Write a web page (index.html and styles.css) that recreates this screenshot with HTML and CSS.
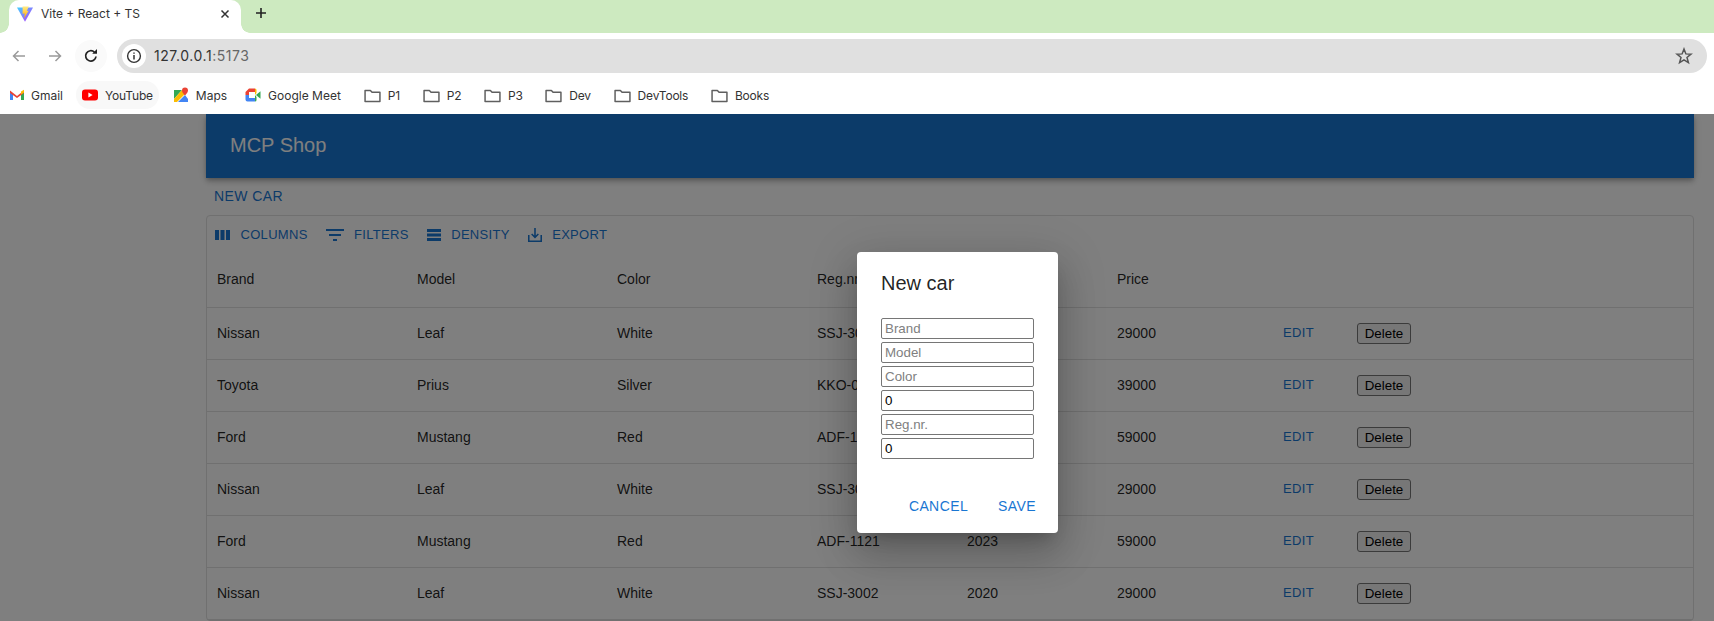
FILE: index.html
```html
<!DOCTYPE html>
<html lang="en">
	<head>
		<meta charset="UTF-8">
		<title>Vite + React + TS</title>
		<link rel="stylesheet" href="styles.css">
	</head>
	<body>
		<div class="tabstrip">
			<div class="tab">
				<svg class="favicon" viewBox="0 0 16 16" width="16" height="16">
					<defs>
						<linearGradient id="vite-a" x1="0" y1="0" x2="1" y2="1"><stop offset="0" stop-color="#41d1ff"/><stop offset="1" stop-color="#bd34fe"/></linearGradient>
						<linearGradient id="vite-b" x1="0" y1="0" x2="0" y2="1"><stop offset="0" stop-color="#ffea83"/><stop offset="1" stop-color="#ffa800"/></linearGradient>
					</defs>
					<path d="M0 1.6 L16 1.6 L8 15.8 Z" fill="url(#vite-a)"/>
					<path d="M5.6 0.6 L11.8 0.6 L9.8 5 L11.6 4.8 L7 12.6 L7.8 7.4 L5.6 7.8 Z" fill="url(#vite-b)"/>
				</svg>
				<span class="tab-title">Vite + React + TS</span>
				<svg class="tab-close" viewBox="0 0 10 10" width="10" height="10"><path d="M1.5 1.5 L8.5 8.5 M8.5 1.5 L1.5 8.5" stroke="#333" stroke-width="1.5"/></svg>
			</div>
			<svg class="new-tab" viewBox="0 0 12 12" width="12" height="12"><path d="M6 1 V11 M1 6 H11" stroke="#222" stroke-width="1.6"/></svg>
		</div>

		<div class="toolbar">
			<svg class="nav-icon" viewBox="0 0 16 16" width="16" height="16"><path d="M14 8 H3 M7.5 3 L2.5 8 L7.5 13" fill="none" stroke="#9a9a9a" stroke-width="1.5"/></svg>
			<svg class="nav-icon" viewBox="0 0 16 16" width="16" height="16"><path d="M2 8 H13 M8.5 3 L13.5 8 L8.5 13" fill="none" stroke="#9a9a9a" stroke-width="1.5"/></svg>
			<div class="reload">
				<svg viewBox="0 0 16 16" width="16" height="16"><path d="M13 8.5 A5.2 5.2 0 1 1 11.4 4.1" fill="none" stroke="#222" stroke-width="1.7"/><path d="M9.2 5.8 H14 V1 Z" fill="#222"/></svg>
			</div>
			<div class="urlbar">
				<span class="site-info">
					<svg viewBox="0 0 16 16" width="16" height="16"><circle cx="8" cy="8" r="6.4" fill="none" stroke="#333" stroke-width="1.4"/><path d="M8 7 V11.5 M8 4.4 V5.8" stroke="#333" stroke-width="1.5"/></svg>
				</span>
				<span class="url">127.0.0.1<span class="url-port">:5173</span></span>
				<svg class="star" viewBox="0 0 18 18" width="18" height="18"><path d="M9 2 L10.9 6.9 L16 7.2 L12 10.5 L13.4 15.6 L9 12.8 L4.6 15.6 L6 10.5 L2 7.2 L7.1 6.9 Z" fill="none" stroke="#555" stroke-width="1.5"/></svg>
			</div>
		</div>

		<div class="bookmarks">
			<span class="bookmark bookmark-gmail">
				<svg viewBox="0 0 16 16" width="16" height="16"><path d="M1 4 V13 H4 V7 Z" fill="#4285f4"/><path d="M15 4 V13 H12 V7 Z" fill="#34a853"/><path d="M1 3.6 L8 9 L15 3.6 L15 6 L8 11 L1 6 Z" fill="#ea4335"/><path d="M12 4.5 L15 2.8 V5.5 L12 7.5 Z" fill="#fbbc04"/></svg>
				Gmail
			</span>
			<span class="bookmark bookmark-hover">
				<svg viewBox="0 0 16 16" width="16" height="16"><rect x="0" y="2.5" width="16" height="11" rx="3" fill="#f00"/><path d="M6.4 5.6 L10.6 8 L6.4 10.4 Z" fill="#fff"/></svg>
				YouTube
			</span>
			<span class="bookmark bookmark-maps">
				<svg viewBox="0 0 16 16" width="16" height="16"><path d="M1 3 L9 3 L1 12 Z" fill="#34a853"/><path d="M9 3 L12 7 L4 15 L1 15 L1 12 Z" fill="#fbbc04"/><path d="M12 8 L15 12 V15 H5 Z" fill="#4285f4"/><path d="M12 0.5 A3 3 0 0 1 15 3.5 C15 5.5 12 8.5 12 8.5 C12 8.5 9 5.5 9 3.5 A3 3 0 0 1 12 0.5 Z" fill="#ea4335"/></svg>
				Maps
			</span>
			<span class="bookmark bookmark-last">
				<svg viewBox="0 0 16 16" width="16" height="16"><path d="M0.5 5 L4 1.5 H10 V5 H4 V8 H0.5 Z" fill="#ea4335"/><path d="M0.5 8 H4 V11 H10 V14.5 H2.5 A2 2 0 0 1 0.5 12.5 Z" fill="#4285f4"/><path d="M10 1.5 A1.5 1.5 0 0 1 11.5 3 V6 L10 8 V5 Z" fill="#fbbc04"/><path d="M10 8 L11.5 10 V13 A1.5 1.5 0 0 1 10 14.5 V11 Z" fill="#34a853"/><path d="M11 8 L15.5 4.2 V11.8 Z" fill="#34a853"/></svg>
				Google Meet
			</span>
			<span class="bookmark bookmark-folder"><svg class="folder" viewBox="0 0 16 16" width="16" height="16"><use href="#folder"/></svg>P1</span>
			<span class="bookmark bookmark-folder"><svg class="folder" viewBox="0 0 16 16" width="16" height="16"><use href="#folder"/></svg>P2</span>
			<span class="bookmark bookmark-folder"><svg class="folder" viewBox="0 0 16 16" width="16" height="16"><use href="#folder"/></svg>P3</span>
			<span class="bookmark bookmark-folder"><svg class="folder" viewBox="0 0 16 16" width="16" height="16"><use href="#folder"/></svg>Dev</span>
			<span class="bookmark bookmark-folder"><svg class="folder" viewBox="0 0 16 16" width="16" height="16"><use href="#folder"/></svg>DevTools</span>
			<span class="bookmark bookmark-folder"><svg class="folder" viewBox="0 0 16 16" width="16" height="16"><use href="#folder"/></svg>Books</span>
		</div>

		<svg class="defs" width="0" height="0">
			<symbol id="folder" viewBox="0 0 16 16"><path d="M1 3.2 H6 L7.6 5 H15 V13.6 H1 Z" fill="none" stroke="#5f5f5f" stroke-width="1.4" stroke-linejoin="round"/></symbol>
		</svg>

		<div class="page">
			<div class="container">
				<header class="appbar">MCP Shop</header>
				<a class="new-car">New car</a>

				<div class="grid">
					<div class="grid-toolbar">
						<span class="tool">
							<svg viewBox="0 0 15 10" width="15" height="10"><path d="M0 0h4v10H0zM5.5 0h4v10h-4zM11 0h4v10h-4z" fill="#1976d2"/></svg>
							Columns
						</span>
						<span class="tool">
							<svg viewBox="3 6 18 12" width="18" height="12"><path d="M10 18h4v-2h-4v2zM3 6v2h18V6H3zm3 7h12v-2H6v2z" fill="#1976d2"/></svg>
							Filters
						</span>
						<span class="tool">
							<svg viewBox="0 0 14 12" width="14" height="12"><path d="M0 0h14v3H0zM0 4.5h14v3H0zM0 9h14v3H0z" fill="#1976d2"/></svg>
							Density
						</span>
						<span class="tool">
							<svg viewBox="3 3 18 18" width="14" height="14"><path d="M19 12v7H5v-7H3v9h18v-9h-2zm-6 .67l2.59-2.58L17 11.5l-5 5-5-5 1.41-1.41L11 12.67V3h2v9.67z" fill="#1976d2"/></svg>
							Export
						</span>
					</div>

					<div class="row row-head">
						<span class="cell">Brand</span><span class="cell">Model</span><span class="cell">Color</span><span class="cell">Reg.nr.</span><span class="cell">Year</span><span class="cell">Price</span>
					</div>
					<div class="row">
						<span class="cell">Nissan</span><span class="cell">Leaf</span><span class="cell">White</span><span class="cell">SSJ-3002</span><span class="cell">2020</span><span class="cell">29000</span><a class="edit">Edit</a><button class="delete">Delete</button>
					</div>
					<div class="row">
						<span class="cell">Toyota</span><span class="cell">Prius</span><span class="cell">Silver</span><span class="cell">KKO-0212</span><span class="cell">2022</span><span class="cell">39000</span><a class="edit">Edit</a><button class="delete">Delete</button>
					</div>
					<div class="row">
						<span class="cell">Ford</span><span class="cell">Mustang</span><span class="cell">Red</span><span class="cell">ADF-1121</span><span class="cell">2023</span><span class="cell">59000</span><a class="edit">Edit</a><button class="delete">Delete</button>
					</div>
					<div class="row">
						<span class="cell">Nissan</span><span class="cell">Leaf</span><span class="cell">White</span><span class="cell">SSJ-3002</span><span class="cell">2020</span><span class="cell">29000</span><a class="edit">Edit</a><button class="delete">Delete</button>
					</div>
					<div class="row">
						<span class="cell">Ford</span><span class="cell">Mustang</span><span class="cell">Red</span><span class="cell">ADF-1121</span><span class="cell">2023</span><span class="cell">59000</span><a class="edit">Edit</a><button class="delete">Delete</button>
					</div>
					<div class="row">
						<span class="cell">Nissan</span><span class="cell">Leaf</span><span class="cell">White</span><span class="cell">SSJ-3002</span><span class="cell">2020</span><span class="cell">29000</span><a class="edit">Edit</a><button class="delete">Delete</button>
					</div>
				</div>
			</div>

			<div class="backdrop"></div>

			<div class="dialog">
				<h2 class="dialog-title">New car</h2>
				<div class="dialog-fields">
					<input placeholder="Brand">
					<input placeholder="Model">
					<input placeholder="Color">
					<input value="0">
					<input placeholder="Reg.nr.">
					<input value="0">
				</div>
				<div class="dialog-actions">
					<a class="dialog-btn">Cancel</a>
					<a class="dialog-btn">Save</a>
				</div>
			</div>
		</div>
	</body>
</html>
```

FILE: styles.css
```css
html,
body {
	margin: 0;
	height: 621px;
	overflow: hidden;
}
body {
	display: flex;
	flex-direction: column;
	font-family: "Liberation Sans", Arial, sans-serif;
	background: #fff;
}
svg {
	flex: none;
}
.defs {
	position: absolute;
}

/* browser chrome */
.tabstrip {
	height: 33px;
	background: #cdeac0;
	display: flex;
	align-items: flex-start;
	padding-left: 9px;
	flex: none;
}
.tab {
	position: relative;
	width: 232px;
	height: 33px;
	box-sizing: border-box;
	background: #fff;
	border-radius: 10px 10px 0 0;
	display: flex;
	align-items: center;
	padding: 0 11px 6px 8px;
	font: 12px Inter, "Noto Sans", sans-serif;
	color: #333;
}
.tab::before,
.tab::after {
	content: "";
	position: absolute;
	bottom: 0;
	width: 9px;
	height: 9px;
}
.tab::before {
	left: -9px;
	background: radial-gradient(circle at 0 0, #cdeac0 8.5px, #fff 9px);
}
.tab::after {
	right: -9px;
	background: radial-gradient(circle at 100% 0, #cdeac0 8.5px, #fff 9px);
}
.favicon {
	margin-right: 8px;
}
.tab-title {
	flex: 1;
}
.new-tab {
	margin: 7px 0 0 14px;
}
.toolbar {
	height: 46px;
	box-sizing: border-box;
	padding: 6px 7px 7px 11px;
	display: flex;
	align-items: center;
	flex: none;
}
.nav-icon {
	margin-right: 20px;
}
.nav-icon + .reload {
	margin-left: -8px;
}
.reload {
	width: 32px;
	height: 32px;
	border-radius: 50%;
	background: #fafafa;
	display: flex;
	align-items: center;
	justify-content: center;
	margin-right: 10px;
}
.urlbar {
	flex: 1;
	height: 34px;
	border-radius: 17px;
	background: #e0e0e0;
	display: flex;
	align-items: center;
	padding: 0 14px 0 5px;
	font: 14px Inter, "Noto Sans", sans-serif;
	letter-spacing: .55px;
	color: #333;
}
.site-info {
	width: 24px;
	height: 24px;
	border-radius: 50%;
	background: #fff;
	display: flex;
	align-items: center;
	justify-content: center;
	margin-right: 8px;
}
.url {
	flex: 1;
}
.url-port {
	color: #666;
}
.bookmarks {
	height: 35px;
	box-sizing: border-box;
	display: flex;
	align-items: center;
	padding: 0 0 3px 1px;
	font: 12px Inter, "Noto Sans", sans-serif;
	color: #333;
	flex: none;
}
.bookmark {
	display: flex;
	align-items: center;
	gap: 7px;
	height: 28px;
	padding: 0 8px;
	border-radius: 14px;
	margin-right: 5px;
}
.bookmark-gmail {
	gap: 6px;
}
.bookmark-hover {
	background: #f8f8f8;
	padding: 0 6px;
	letter-spacing: -.2px;
	margin-right: 6px;
}
.bookmark-maps {
	margin-right: 2px;
}
.bookmark-last {
	margin-right: 7px;
}
.bookmark-folder {
	margin-right: 6.7px;
	letter-spacing: -.2px;
}
.folder {
	width: 17px;
	height: 17px;
}

/* page */
.page {
	flex: 1;
	position: relative;
	overflow: hidden;
	min-height: 0;
	color: rgba(0, 0, 0, .87);
	font-size: 14px;
}
.container {
	width: 1488px;
	margin-left: 206px;
}
.appbar {
	height: 64px;
	box-sizing: border-box;
	padding: 0 24px;
	background: #1976d2;
	color: #fff;
	font-size: 20px;
	line-height: 62px;
	box-shadow: 0 2px 4px -1px rgba(0, 0, 0, .2), 0 4px 5px rgba(0, 0, 0, .14), 0 1px 10px rgba(0, 0, 0, .12);
}
.new-car,
.tool,
.edit,
.dialog-btn {
	color: #1976d2;
	text-transform: uppercase;
	letter-spacing: .4px;
}
.new-car {
	display: block;
	padding: 8px;
	line-height: 20px;
	height: 37px;
	box-sizing: border-box;
}
.grid {
	border: 1px solid #e0e0e0;
	border-radius: 4px;
}
.grid-toolbar {
	height: 36px;
	display: flex;
	align-items: center;
	padding: 0 0 0 8px;
	gap: 18px;
	font-size: 13px;
}
.tool {
	display: flex;
	align-items: center;
	gap: 10.5px;
	letter-spacing: .3px;
}
.tool svg {
	margin-top: 2px;
}
.row {
	height: 52px;
	display: grid;
	grid-template-columns: 200px 200px 200px 150px 150px 166px 74px auto;
	align-items: center;
	padding-left: 10px;
	border-bottom: 1px solid #e0e0e0;
	box-sizing: border-box;
}
.row-head {
	height: 56px;
	grid-template-columns: 200px 200px 200px 150px 150px auto;
}
.cell {
	margin-bottom: 2px;
}
.edit {
	font-size: 13px;
	margin-bottom: 2px;
}
.delete {
	justify-self: start;
	width: 54px;
	height: 21px;
	padding: 0;
	font: 13.33px "Liberation Sans", Arial, sans-serif;
	background: #efefef;
	border: 1px solid #767676;
	border-radius: 3px;
	color: #000;
}

/* dialog */
.backdrop {
	position: absolute;
	inset: 0;
	background: rgba(0, 0, 0, .5);
}
.dialog {
	position: absolute;
	left: 857px;
	top: 138px;
	width: 201px;
	height: 281px;
	box-sizing: border-box;
	background: #fff;
	border-radius: 4px;
	box-shadow: 0 11px 15px -7px rgba(0, 0, 0, .2), 0 24px 38px 3px rgba(0, 0, 0, .14), 0 9px 46px 8px rgba(0, 0, 0, .12);
	display: flex;
	flex-direction: column;
}
.dialog-title {
	margin: 0;
	padding: 15px 24px 17px;
	font-size: 20px;
	font-weight: 400;
	line-height: 32px;
}
.dialog-fields {
	padding: 2px 24px 0;
	display: flex;
	flex-direction: column;
	gap: 3px;
}
.dialog-fields input {
	width: 153px;
	height: 21px;
	box-sizing: border-box;
	padding: 1px 3px;
	border: 1px solid #767676;
	border-radius: 2px;
	font: 13.33px "Liberation Sans", Arial, sans-serif;
	color: #000;
}
.dialog-fields input::placeholder {
	color: #808080;
}
.dialog-actions {
	margin-top: auto;
	padding: 8px 14px 9px 8px;
	display: flex;
	justify-content: flex-end;
	gap: 14px;
}
.dialog-btn {
	padding: 6px 8px;
	line-height: 24px;
}
```
